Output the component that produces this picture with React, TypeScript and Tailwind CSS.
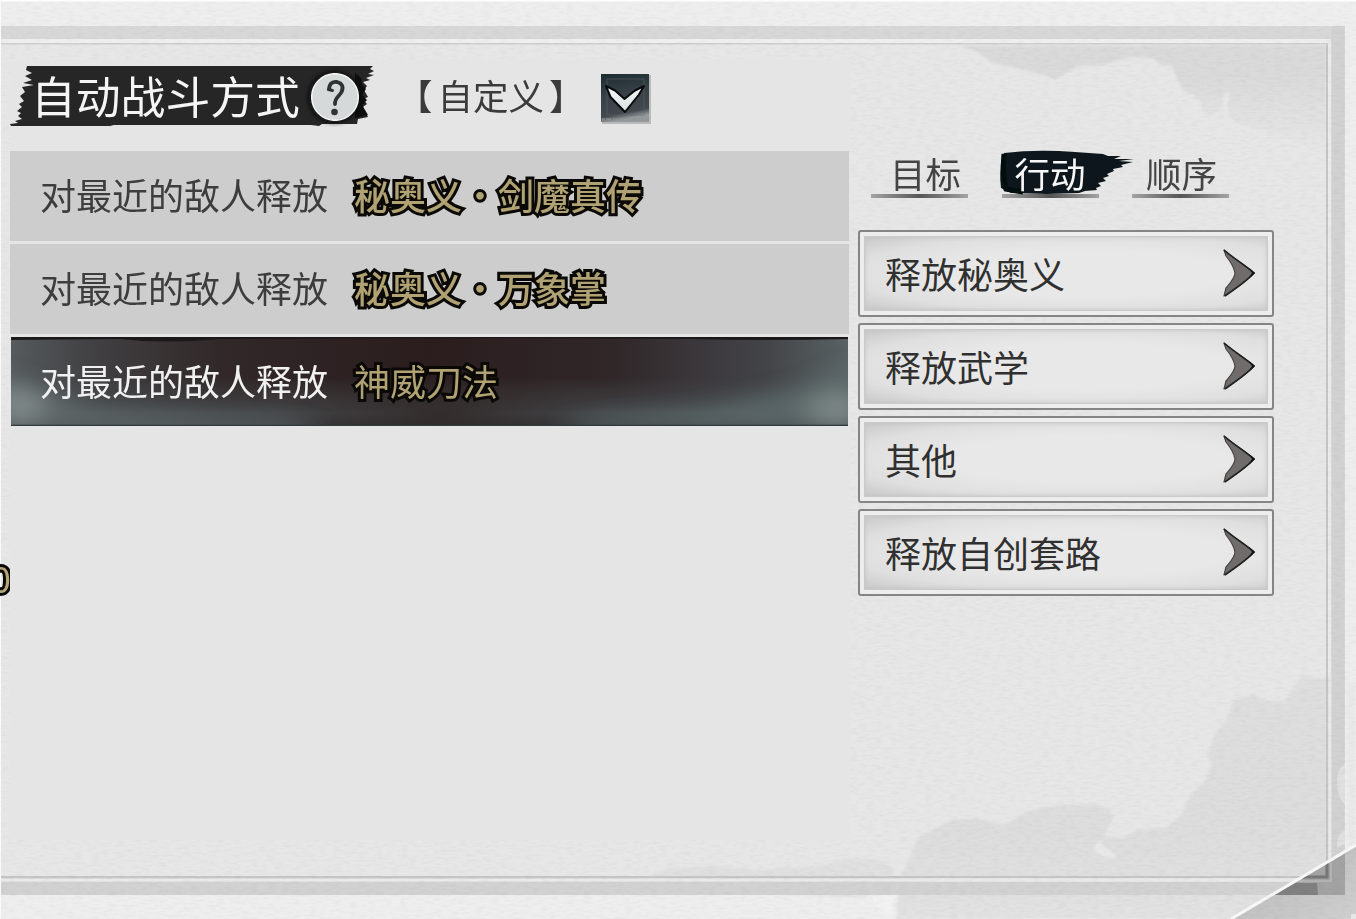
type Rule = {
  target: string;
  skill: string[];
  active?: boolean;
};

const rules: Rule[] = [
  { target: '对最近的敌人释放', skill: ['秘奥义', '剑魔真传'] },
  { target: '对最近的敌人释放', skill: ['秘奥义', '万象掌'] },
  { target: '对最近的敌人释放', skill: ['神威刀法'], active: true },
];

// outer labels sit slightly right of their underline's centre
const tabs = [
  { label: '目标', className: 'pl-3 text-[#444]' },
  { label: '行动', className: 'text-[#f7f7f7]', active: true },
  { label: '顺序', className: 'pl-0.5 text-[#444]' },
];
const actions = ['释放秘奥义', '释放武学', '其他', '释放自创套路'];

// Paper sheet: double frame, ink clouds and the folded corner
function Paper() {
  return (
    <svg className="absolute inset-0 h-full w-full" viewBox="0 0 1356 919" aria-hidden="true">
      <defs>
        <filter id="grain" x="0" y="0" width="100%" height="100%">
          <feTurbulence type="fractalNoise" baseFrequency="0.12 0.4" numOctaves="3" seed="4" />
          <feColorMatrix values="0 0 0 0 0  0 0 0 0 0  0 0 0 0 0  0.5 0 0 0 -0.19" />
        </filter>
        <filter id="soft"><feGaussianBlur stdDeviation="1.200" /></filter>
        <linearGradient id="cloudTop" x1="0" y1="0" x2="0" y2="1">
          <stop offset="0.3" stopColor="#dadada" />
          <stop offset="1" stopColor="#dadada" stopOpacity="0" />
        </linearGradient>
        <linearGradient id="cloudBottom" x1="0" y1="0" x2="0" y2="1">
          <stop offset="0" stopColor="#dfdfdf" />
          <stop offset="0.6" stopColor="#dddddd" />
          <stop offset="1" stopColor="#e2e2e2" />
        </linearGradient>
        <linearGradient id="fold" x1="0" y1="0" x2="1" y2="1">
          <stop offset="0.3" stopColor="#bdbdbd" />
          <stop offset="1" stopColor="#d0d0d0" />
        </linearGradient>
      </defs>
      <rect width="1356" height="919" fill="#eeeeee" />
      <rect y="26" width="1345" height="869" fill="#d8d8d8" />
      <rect y="39" width="1331" height="842" fill="#efefef" />
      <rect y="43" width="1328" height="836" fill="#cecece" />
      <rect y="44.500" width="1326" height="832" fill="#e7e7e7" />
      <g filter="url(#soft)">
        <path
          d="M960 46 L978 52 L992 63 L1022 69 L1056 79 L1078 66 L1104 65 L1130 57 L1152 58 L1160 64 L1172 66 L1182 89 L1199 99 L1204 111 L1210 118 L1222 106 L1224 92 L1229 94 L1228 116 L1240 124 L1326 150 V45 Z"
          fill="url(#cloudTop)"
        />
        <path
          d="M896 919 L899 884 L905 868 L910 856 L918 838 L935 828 L950 821 L975 818 L1003 825 L1024 814 L1038 808 L1065 805 L1092 804 L1108 808 L1113 818 L1104 836 L1123 838 L1137 830 L1166 828 L1182 814 L1190 796 L1205 780 L1212 766 L1207 755 L1214 736 L1225 722 L1234 699 L1252 695 L1266 700 L1284 702 L1297 684 L1302 674 L1316 678 L1340 676 V919 Z"
          fill="url(#cloudBottom)"
        />
        <path d="M640 880 L670 868 L720 866 L760 870 L820 866 L850 858 L880 860 L894 870 L890 885 L862 898 L770 894 Z" fill="#dadada" opacity="0.5" />
        <path d="M1093 849 L1100 840 L1106 848 L1118 857 L1106 858 Z" fill="#e9e9e9" />
        <path d="M871 896 L893 894 L892 919 L880 913 Z" fill="#f2f2f2" />
        <path d="M1348 682 L1356 678 V846 H1348 Z" fill="#e9e9e9" />
      </g>
      <path d="M0 877 H1327 V45" fill="none" stroke="#c6c6c6" strokeWidth="2" />
      <path d="M0 880 H1330 V41" fill="none" stroke="#eaeaea" strokeWidth="3" />
      <path d="M0 888.500 H1338 V26" fill="none" stroke="#d2d2d2" strokeWidth="13" />
      <path d="M1345 764 Q1337 768 1337 784 Q1338 798 1345 805 Z M1345 830 Q1336 835 1337 848 L1345 844 Z" fill="#e0e0e0" />
      <path d="M1356 845 L1231 919 H1356 Z" fill="url(#fold)" />
      <path d="M1274 895 L1329 863 L1345 853 V895 Z" fill="#a3a3a3" />
      <path d="M1274 895 L1295 883 H1317 L1318 895 Z" fill="#808080" />
      <path d="M1302 877 H1327 V863" fill="none" stroke="#777" strokeWidth="3" />
      <path d="M1296 881 H1331 V863" fill="none" stroke="#b4b4b4" strokeWidth="2" />
      <path d="M1356 845 L1231 919" stroke="#f8f8f8" strokeWidth="3" />
      <rect width="1356" height="919" filter="url(#grain)" opacity="0.12" />
      <rect x="10" y="60" width="840" height="780" fill="#e5e5e5" />
      <rect width="1356" height="1.500" fill="#fdfdfd" />
      <rect width="1" height="919" fill="#fafafa" />
      <rect x="1351" y="914" width="5" height="5" fill="#e6e6e6" />
    </svg>
  );
}

function TitleBrush() {
  return (
    <svg className="absolute inset-0 h-full w-full" viewBox="0 0 364 62" aria-hidden="true">
      <defs>
        <filter id="brushBlur"><feGaussianBlur stdDeviation="2.500" /></filter>
        <filter id="brushEdge"><feGaussianBlur stdDeviation="0.600" /></filter>
      </defs>
      <path
        d="M17 1 H363 L360 4 L364 6 L358 9 L364 10 L356 13 L360 15 L353 17 L357 21 L354 25 L358 32 L353 34 L357 39 L353 42 L358 52 L348 54 L347 59 H312 L309 61 L301 60 H104 L100 61 H1 L0 59 L8 58 L5 56 L12 54 L8 51 L11 48 L7 46 L12 42 L9 39 L14 36 L10 31 L15 27 L12 22 L24 20 L13 18 L22 15 L15 11 L22 8 L16 5 Z"
        fill="#262626"
        filter="url(#brushEdge)"
      />
      <circle cx="324" cy="32" r="25.500" fill="#0b0b0b" filter="url(#brushBlur)" />
      <path d="M345 8 L351 13 L352 20 L356 24 L352 30 L357 35 L352 40 L358 50 L345 53 Z" fill="#0b0b0b" filter="url(#brushEdge)" />
    </svg>
  );
}

function HelpIcon() {
  return (
    <svg className="mt-0.5 h-12 w-12 shrink-0" viewBox="0 0 48 48" aria-hidden="true">
      <circle cx="24" cy="24" r="23.300" fill="#d6d9da" stroke="#f4f4f4" strokeWidth="1.500" />
      <path d="M18 16 C18.500 10 22 8.500 26 9 C31 10 33 14 30.500 19 C28.500 23 23.500 25 24 31" fill="none" stroke="#303234" strokeWidth="3.800" strokeLinecap="round" />
      <path d="M17.500 16.500 L21.500 17.500" stroke="#303234" strokeWidth="3" strokeLinecap="round" />
      <circle cx="23.500" cy="39" r="3.300" fill="#303234" />
    </svg>
  );
}

function DropdownIcon() {
  return (
    <svg className="h-[52px] w-[52px]" viewBox="0 0 52 52" aria-hidden="true">
      <defs>
        <linearGradient id="dropBg" x1="0" y1="0" x2="0.2" y2="1">
          <stop offset="0" stopColor="#1c2c30" />
          <stop offset="0.5" stopColor="#384147" />
          <stop offset="0.87" stopColor="#42484e" />
          <stop offset="1" stopColor="#94999b" />
        </linearGradient>
        <linearGradient id="dropTick" x1="0" y1="0" x2="0" y2="1">
          <stop offset="0" stopColor="#f6f8f8" />
          <stop offset="1" stopColor="#d5e0e2" />
        </linearGradient>
      </defs>
      <rect x="2" y="2" width="49" height="49" fill="#b9bbbb" />
      <rect x="1" y="1" width="48" height="48" fill="url(#dropBg)" />
      <rect x="7" y="6" width="37" height="36" fill="none" stroke="#606a70" strokeWidth="0.800" opacity="0.6" />
      <path d="M2 46.500 H49" stroke="#8f9698" strokeWidth="2.500" strokeDasharray="3 1 5 2 1 1" opacity="0.7" />
      <path d="M6 13 L15 17.500 L24.500 26 L35 17.500 L44 13 L39 21.500 L25 39 L10.500 24 Z" fill="url(#dropTick)" stroke="#08090a" strokeWidth="2" strokeLinejoin="round" />
    </svg>
  );
}

function RuleRow({ rule }: { rule: Rule }) {
  return (
    <li className={`relative flex h-[90px] items-center pb-[5px] pl-[30px] text-[36px] leading-none ${rule.active ? 'text-[#f1f1f1]' : 'bg-[#cdcdcd] text-[#3d3d3d]'}`}>
      {rule.active && <RowInk />}
      <span className="relative">{rule.target}</span>
      <span
        className={`relative ml-[26px] flex text-[#b0a273] [paint-order:stroke_fill] [-webkit-text-stroke:6px_#0a0906] ${rule.active ? '' : 'font-medium'}`}
      >
        {rule.skill.map((part, i) => (
          <span key={part} className="flex">
            {i > 0 && <span className="w-9 text-center font-normal">·</span>}
            {part}
          </span>
        ))}
      </span>
    </li>
  );
}

function RowInk() {
  return (
    <svg className="absolute inset-0 h-full w-full" viewBox="0 0 839 90" preserveAspectRatio="none" aria-hidden="true">
      <defs>
        <linearGradient id="inkBase">
          <stop offset="0" stopColor="#565b5d" />
          <stop offset="0.1" stopColor="#414042" />
          <stop offset="0.25" stopColor="#312829" />
          <stop offset="0.5" stopColor="#2b1d1e" />
          <stop offset="0.72" stopColor="#302729" />
          <stop offset="0.9" stopColor="#434448" />
          <stop offset="1" stopColor="#596264" />
        </linearGradient>
        <linearGradient id="inkMist" x1="0" y1="0" x2="0" y2="1">
          <stop offset="0.45" stopColor="#4b5254" stopOpacity="0" />
          <stop offset="0.85" stopColor="#4b5254" stopOpacity="0.75" />
          <stop offset="1" stopColor="#3c4142" stopOpacity="0.7" />
        </linearGradient>
        <radialGradient id="inkDark">
          <stop offset="0" stopColor="#2c2222" stopOpacity="0.7" />
          <stop offset="1" stopColor="#2c2222" stopOpacity="0" />
        </radialGradient>
        <filter id="inkBlur" x="-20%" y="-100%" width="140%" height="300%"><feGaussianBlur stdDeviation="14 9" /></filter>
        <clipPath id="inkClip"><rect x="1" width="837" height="89" /></clipPath>
      </defs>
      <g clipPath="url(#inkClip)">
        <rect width="839" height="90" fill="url(#inkBase)" />
        <rect width="839" height="90" fill="url(#inkMist)" />
        <ellipse cx="430" cy="78" rx="170" ry="45" fill="url(#inkDark)" />
        <g filter="url(#inkBlur)">
          <path d="M-10 35 L40 55 L90 72 L300 86 V100 H-10 Z" fill="#667071" opacity="0.65" />
          <ellipse cx="8" cy="68" rx="26" ry="20" fill="#8b9695" opacity="0.7" />
          <path d="M560 84 L700 70 L790 50 L850 25 V94 H560 Z" fill="#616d6f" opacity="0.7" />
          <ellipse cx="828" cy="72" rx="30" ry="18" fill="#889391" opacity="0.7" />
        </g>
        <path d="M1 0 H838 V2 Q760 4 680 2 L500 1 L210 2 Q155 7 110 2 L1 3 Z" fill="#1b1819" />
        <path d="M1 88.500 H838" stroke="#303a3b" strokeWidth="1.500" />
      </g>
    </svg>
  );
}

function TabBrush() {
  return (
    <svg className="absolute -top-[9px] -left-[3px] h-[50px] w-[140px]" viewBox="0 0 140 50" aria-hidden="true">
      <defs>
        <filter id="tabEdge"><feGaussianBlur stdDeviation="0.700" /></filter>
      </defs>
      <g filter="url(#tabEdge)">
        <path
          d="M5 5 Q38 1 76 4 L104 6 L109 8 L122 8 L115 11 L135 11 L120 13 L134 14 L122 17 L124 19 L114 21 L115 23 L108 26 L110 28 L104 30 L107 33 L99 35 L102 38 L97 40 L98 42 L86 43 L80 45 L48 46 L12 45 L2 40 Q0 25 3 9 Z"
          fill="#11181d"
        />
        <path d="M5 6 Q3 26 7 41 L24 44" fill="none" stroke="#050708" strokeWidth="5" />
      </g>
    </svg>
  );
}

function Tab({ label, className, active }: { label: string; className: string; active?: boolean }) {
  return (
    <button className="relative flex h-[41px] w-[97px] flex-col items-center">
      {active && <TabBrush />}
      <span className={`relative -mt-0.5 text-[35.500px] leading-[36px] whitespace-nowrap ${className}`}>{label}</span>
      <span className="mt-auto h-1 w-full bg-linear-to-r from-[#a4a4a4] via-[#555] to-[#a4a4a4]" />
    </button>
  );
}

function ActionButton({ label }: { label: string }) {
  return (
    <button className="flex h-[87px] w-full rounded-[3px] border-2 border-[#858585] bg-[#ededed] p-[4px]">
      <span className="flex h-full w-full items-center justify-between border border-[#cacaca] bg-[radial-gradient(ellipse_at_55%_50%,#e8e8e8_45%,#dfdfdf_75%,#c8c8c8_100%)] pr-[10px] pl-[20px] shadow-[inset_0_0_4px_#c4c4c4]">
        <span className="-mt-px text-[36px] leading-none text-[#303030]">{label}</span>
        <svg className="mb-px h-[50px] w-[36px]" viewBox="0 0 36 50" aria-hidden="true">
          <path d="M3 2 C12 10 24 17 33 25 C25 34 13 41 3 48 L5 40 C10 34 14 30 14 25 C13 19 9 13 5 8 Z" fill="#706c6c" stroke="#454545" strokeWidth="1.200" strokeLinejoin="round" />
          <path d="M3 2 C12 10 25 18 33 25 C26 33 14 41 4 48" fill="none" stroke="#202020" strokeWidth="1.600" />
          <path d="M28 20 L34 25 L28 30 L31 25 Z" fill="#111" />
        </svg>
      </span>
    </button>
  );
}

export default function App() {
  return (
    <main lang="zh-CN" className="relative h-[919px] w-[1356px] overflow-hidden bg-[#ededed] font-['Noto_Sans_CJK_SC',sans-serif]">
      <Paper />
      <div className="absolute top-[558px] left-0 h-10 w-[10px] overflow-hidden">
        <span className="block -translate-x-[9px] -translate-y-px text-[36px] leading-10 text-[#b4a677] [-webkit-text-stroke:6px_#0a0906] [paint-order:stroke_fill]">0</span>
      </div>
      <div className="relative flex gap-[9px] pt-[65px] pl-[10px]">
        <section className="w-[839px]">
          <header className="flex h-[62px] items-center">
            <div className="relative flex h-[62px] w-[364px] items-center">
              <TitleBrush />
              <h1 className="relative -mt-0.5 ml-[21px] w-[280px] text-[44.800px] leading-none whitespace-nowrap text-[#f5f5f5]">自动战斗方式</h1>
              <button className="relative"><HelpIcon /></button>
            </div>
            <span className="-mt-0.5 ml-[23px] text-[35.500px] leading-none text-[#3b3b3b]">
              <span className="mr-[5px]">【</span>自定义<span className="ml-[5px]">】</span>
            </span>
            <button className="mt-1.5 ml-[15px]"><DropdownIcon /></button>
          </header>
          <ul className="mt-6 flex flex-col gap-[3px]">
            {rules.map((rule, i) => (
              <RuleRow key={i} rule={rule} />
            ))}
          </ul>
        </section>
        <aside className="w-[416px] pt-[92px]">
          <nav className="flex gap-[33.500px] pl-[13px]">
            {tabs.map((tab) => (
              <Tab key={tab.label} {...tab} />
            ))}
          </nav>
          <div className="mt-8 flex flex-col gap-[6px]">
            {actions.map((action) => (
              <ActionButton key={action} label={action} />
            ))}
          </div>
        </aside>
      </div>
    </main>
  );
}
